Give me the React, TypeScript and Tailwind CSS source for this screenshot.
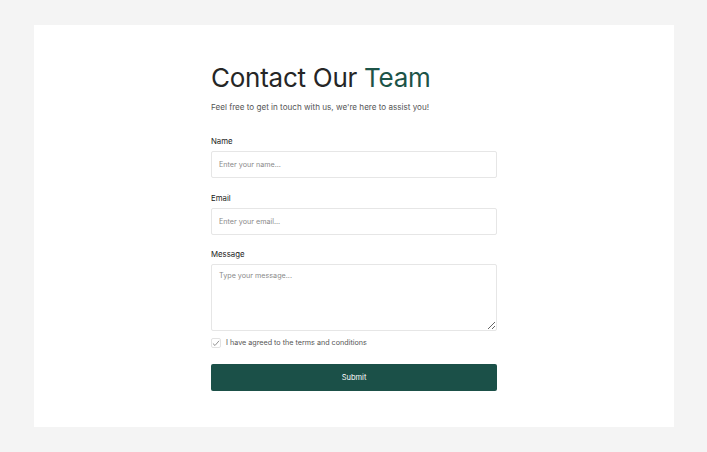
import React from "react";

export default function App() {
  return (
    <div className="min-h-[452px] w-[707px] bg-[#f4f4f4] pt-[25px] pl-[34px]" style={{ fontFamily: "Inter, 'Noto Sans', sans-serif" }}>
      <div className="w-[640px] h-[402px] bg-white pt-[37px]">
        <div className="w-[286px] mx-auto flex flex-col">
          <h1 className="text-[26px] leading-[32px] font-normal text-[#262626] tracking-[-0.01em]">
            Contact Our <span className="text-[#1d5448]">Team</span>
          </h1>
          <p className="mt-[7px] text-[8.1px] leading-[12px] text-[#555]">
            Feel free to get in touch with us, we're here to assist you!
          </p>

          <label className="mt-[22px] text-[7.8px] leading-[12px] font-normal text-[#1a1a1a]">Name</label>
          <input
            className="mt-[4px] h-[27px] w-full border border-[#e6e6e6] rounded-[2px] px-[7px] text-[7.2px] text-[#333] placeholder:text-[#8a8a8a] outline-none"
            placeholder="Enter your name..."
          />

          <label className="mt-[14px] text-[7.8px] leading-[12px] font-normal text-[#1a1a1a]">Email</label>
          <input
            className="mt-[4px] h-[27px] w-full border border-[#e6e6e6] rounded-[2px] px-[7px] text-[7.2px] text-[#333] placeholder:text-[#8a8a8a] outline-none"
            placeholder="Enter your email..."
          />

          <label className="mt-[13px] text-[7.8px] leading-[12px] font-normal text-[#1a1a1a]">Message</label>
          <textarea
            className="mt-[4px] h-[67px] w-full border border-[#e6e6e6] rounded-[2px] px-[7px] py-[6px] text-[7.2px] leading-[10px] text-[#333] placeholder:text-[#8a8a8a] outline-none"
            placeholder="Type your message..."
          />

          <div className="mt-[6px] flex items-center gap-[5px] h-[12px]">
            <span className="w-[10px] h-[10px] border border-[#e2e2e2] rounded-[2px] flex items-center justify-center bg-white">
              <svg width="9" height="9" viewBox="0 0 8 8" fill="none">
                <path d="M1.2 4.3 L3 6 L6.8 1.6" stroke="#777" strokeWidth="0.8" strokeLinecap="round" strokeLinejoin="round" />
              </svg>
            </span>
            <span className="text-[7.2px] text-[#555] leading-[12px]">I have agreed to the terms and conditions</span>
          </div>

          <button className="mt-[15px] h-[27px] w-full bg-[#1b5048] rounded-[2px] text-white text-[7.5px] font-normal">
            Submit
          </button>
        </div>
      </div>
    </div>
  );
}
